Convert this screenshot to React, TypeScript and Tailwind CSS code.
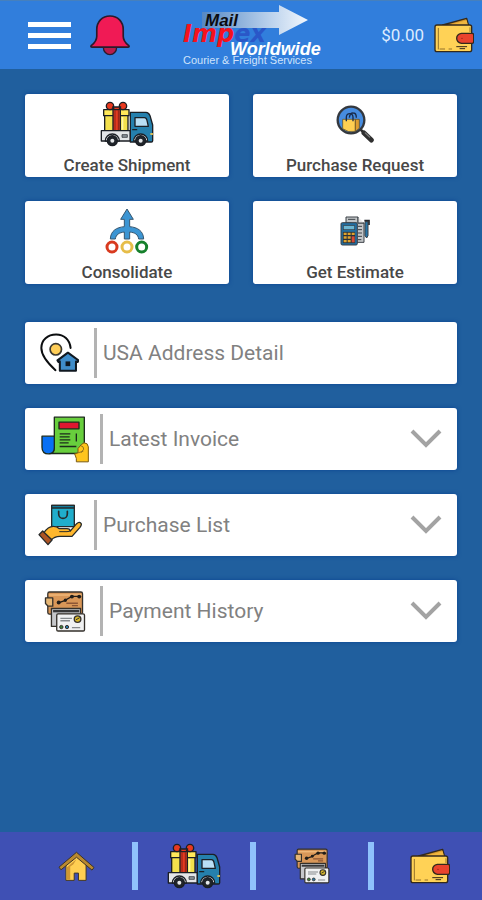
import type { ReactNode } from "react";

type IconProps = { className?: string };

function BellIcon({ className = "" }: IconProps) {
  return (
    <svg viewBox="0 0 120 124" className={className} aria-hidden="true">
      <path d="M40 98a20 22 0 0 0 40 0v-4H40z" fill="#b81c4c" stroke="#2b1a2c" strokeWidth="4" />
      <path
        d="M60 3C36 3 20 21 20 44v20c0 12-4 18-16 28-3 3-2 5 2 5h108c4 0 5-2 2-5-12-10-16-16-16-28V44C100 21 84 3 60 3z"
        fill="#f01a55"
        stroke="#2b1a2c"
        strokeWidth="5"
        strokeLinejoin="round"
      />
    </svg>
  );
}

function WalletIcon({ className = "" }: IconProps) {
  return (
    <svg viewBox="0 0 120 108" className={className} aria-hidden="true">
      <g stroke="#33291c" strokeWidth="4" strokeLinejoin="round" strokeLinecap="round">
        <path d="M26 24 98 4l6 22z" fill="#d99a2b" />
        <path d="M45 24 98 10l4 16z" fill="#f0b63f" stroke="none" />
        <rect x="3" y="24" width="110" height="80" rx="6" fill="#ffd256" />
        <path d="M13 34v62M18 96h14M45 96h8M108 32v12" fill="none" stroke="#94722b" strokeWidth="3" />
        <path d="M68 89h30M78 95h14" fill="none" strokeWidth="3" />
        <path d="M82 49h32q5 0 5 5v20q0 5-5 5H82q-14-3-14-15t14-15z" fill="#e9432d" />
        <circle cx="84" cy="64" r="2" fill="#8c2118" stroke="none" />
      </g>
    </svg>
  );
}

function TruckIcon({ className = "" }: IconProps) {
  return (
    <svg viewBox="0 0 162 138" className={className} aria-hidden="true">
      <g stroke="#1b1f25" strokeWidth="4" strokeLinejoin="round">
        <rect x="14" y="42" width="70" height="48" fill="#f3e04c" />
        <rect x="11" y="26" width="76" height="18" fill="#ffe95a" />
        <path d="M39 25h22v65H39z" fill="#e23a20" />
        <path d="M45 28v60M55 28v60" stroke="#8d2116" strokeWidth="3" />
        <path d="M65 48v38h5V48z" fill="#fff7a5" stroke="none" />
        <circle cx="30" cy="15" r="11" fill="#e8391f" />
        <circle cx="69" cy="15" r="11" fill="#e8391f" />
        <path d="M38 18h24l-5 8H43z" fill="#e8391f" />
        <path d="M4 89h87v31H4z" fill="#e4e6e8" />
        <path d="M91 34h47q8 0 12 10l8 28v47q0 4-4 4H91z" fill="#2580ad" />
        <path d="M105 50h28q6 0 8 8l4 18h-40z" fill="#b9dff5" />
        <path d="M66 101h16v8H66z" fill="#8f969c" strokeWidth="2" />
        <path d="M98 86h12" strokeLinecap="round" />
        <path d="M151 99h8" stroke="#f2cd52" strokeWidth="5" />
        <path d="M16 120a21 21 0 0 1 42 0zM101 120a21 21 0 0 1 42 0z" fill="#f2f4f5" />
        <circle cx="37" cy="119" r="15" fill="#20252b" />
        <circle cx="122" cy="119" r="15" fill="#20252b" />
        <circle cx="37" cy="119" r="6" fill="#e5e8ea" stroke="none" />
        <circle cx="122" cy="119" r="6" fill="#e5e8ea" stroke="none" />
      </g>
    </svg>
  );
}

function SearchBagIcon({ className = "" }: IconProps) {
  return (
    <svg viewBox="0 0 114 114" className={className} aria-hidden="true">
      <path d="m74 74 12 12" stroke="#2c2c2c" strokeWidth="8" />
      <path d="m84 84 22 21" stroke="#303030" strokeWidth="15" strokeLinecap="round" />
      <path d="m88 84 13 12" stroke="#777" strokeWidth="4" strokeLinecap="round" />
      <circle cx="45" cy="45" r="40" fill="#468ce0" stroke="#34383e" strokeWidth="7" />
      <path d="M20 43h38v36q-22 5-38-8z" fill="#ffcf52" stroke="#5b451b" strokeWidth="2" />
      <path d="M58 43h12v27l-12 9z" fill="#dc9c30" stroke="#5b451b" strokeWidth="2" />
      <path d="M31 49V36q1-10 10-10t10 10v13M40 38q2-15 12-14 9 0 9 14" fill="none" stroke="#182b4b" strokeWidth="4" />
    </svg>
  );
}

function MergeIcon({ className = "" }: IconProps) {
  return (
    <svg viewBox="0 0 132 138" className={className} aria-hidden="true">
      <path
        d="M66 3 47 34h11v22C35 58 17 68 16 93h15c2-14 12-19 27-21v21h16V72c16 2 25 7 27 21h15c-1-25-19-35-42-37V34h11z"
        fill="#3c95d3"
        stroke="#36566f"
        strokeWidth="3"
        strokeLinejoin="round"
      />
      <circle cx="21" cy="117" r="15" fill="#fff" stroke="#d83a1f" strokeWidth="9" />
      <circle cx="66" cy="117" r="15" fill="#fff" stroke="#e6bd49" strokeWidth="9" />
      <circle cx="110" cy="117" r="15" fill="#fff" stroke="#16802c" strokeWidth="9" />
    </svg>
  );
}

function CalculatorIcon({ className = "" }: IconProps) {
  return (
    <svg viewBox="0 0 90 90" className={className} aria-hidden="true">
      <g stroke="#3b4147" strokeWidth="3">
        <path d="M18 3h36v18h18v58H34V21H18z" fill="#c3c6c8" />
        <path d="M54 3v18h18" fill="#e6e6e6" />
        <path d="M24 10h22M54 31h12M54 41h12M54 51h12M54 61h12M54 71h10" />
        <path d="M75 17h9v42l-4 7-5-7z" fill="#2877a9" />
        <path d="M73 14h14v13" fill="none" stroke="#23272c" strokeWidth="5" />
        <rect x="3" y="20" width="49" height="67" rx="4" fill="#226d9f" />
        <rect x="10" y="29" width="34" height="12" fill="#6bb6d3" strokeWidth="2" />
        <path d="M9 48h36v33H9z" fill="#2c3238" strokeWidth="1" />
      </g>
      <g fill="#e0a42e">
        <path d="M11 50h9v7h-9zM23 50h9v7h-9zM35 50h9v7h-9zM11 61h9v7h-9zM23 61h9v7h-9zM11 72h9v7h-9zM23 72h9v7h-9z" />
        <path d="M35 61h9v18h-9z" fill="#d64a36" />
      </g>
    </svg>
  );
}

function AddressIcon({ className = "" }: IconProps) {
  return (
    <svg viewBox="0 0 116 118" className={className} aria-hidden="true">
      <path
        d="M46 110C22 88 4 65 4 44 4 20 23 4 48 4c23 0 40 15 43 40"
        fill="none"
        stroke="#0c0e10"
        strokeWidth="6"
        strokeLinecap="round"
      />
      <circle cx="47" cy="48" r="17" fill="#ffce58" stroke="#3b382f" strokeWidth="5" />
      <path
        d="M59 84v28h48V84l5 2 3-5-32-23-31 23 3 5z"
        fill="#3f8dca"
        stroke="#101820"
        strokeWidth="6"
        strokeLinejoin="round"
      />
      <path d="M76 84h14v14H76z" fill="#101820" />
    </svg>
  );
}

function InvoiceIcon({ className = "" }: IconProps) {
  return (
    <svg viewBox="0 0 144 140" className={className} aria-hidden="true">
      <g stroke="#1c2b1d" strokeWidth="4" strokeLinejoin="round">
        <path d="M40 3h90v96q0 13-13 13H25q15-2 15-17z" fill="#68cf3d" />
        <path d="M3 60h37v35q0 18-17 18-20 0-20-20z" fill="#0870f4" />
        <path d="M54 18h60v20H54z" fill="#df1730" />
        <path d="M56 53h32M56 62h30M56 71h32M56 80h27M106 52v24M56 91h50" strokeWidth="4" />
        <path d="M142 137v-45q-1-12-13-12l-8 5-10 12v13l-10 3 5 14v10z" fill="#ffc51d" stroke="#7a5a12" strokeWidth="3" />
        <path d="M120 89q8 1 8 10l-8 11M111 110l16-5" fill="none" stroke="#94731c" strokeWidth="3" />
      </g>
    </svg>
  );
}

function HandBagIcon({ className = "" }: IconProps) {
  return (
    <svg viewBox="0 0 132 126" className={className} aria-hidden="true">
      <g stroke="#262a2b" strokeWidth="4" strokeLinejoin="round" strokeLinecap="round">
        <path d="M41 4h68v64H41z" fill="#20adcb" />
        <path d="M41 4h68v8H41z" fill="#137d9d" />
        <path d="M62 22v7c0 19 26 19 26 0v-7" fill="none" strokeWidth="5" />
        <path
          d="M17 87q14-21 30-20 10 0 17 7h23q10 0 9 8l20-23q8-7 13-1 3 4-3 12l-24 27H66q-18 1-25 10z"
          fill="#ffb72e"
        />
        <path d="M65 83h22q8 0 9-3" fill="none" strokeWidth="3" />
        <path d="m14 81 28 27-12 14L3 92z" fill="#ad5424" />
      </g>
    </svg>
  );
}

function CardsIcon({ className = "" }: IconProps) {
  return (
    <svg viewBox="0 0 126 124" className={className} aria-hidden="true">
      <g stroke="#34302b" strokeWidth="4" strokeLinejoin="round">
        <rect x="11" y="3" width="105" height="67" rx="5" fill="#d99758" />
        <path d="M14 12h99" stroke="#efb778" strokeWidth="5" />
        <path d="m43 36 17-6 25-14h20" fill="none" stroke="#211d19" />
        <g fill="#211d19" stroke="none">
          <circle cx="44" cy="35" r="6" />
          <circle cx="64" cy="28" r="5" />
          <circle cx="84" cy="17" r="6" />
          <circle cx="106" cy="17" r="6" />
        </g>
        <path d="M67 37h35M84 44h18" stroke="#8d5635" />
        <path d="M4 21h22v25H12L4 38z" fill="#e6b675" />
        <path d="M22 53h88v18H42v36H22z" fill="#c6c7ca" />
        <path d="M27 61h79" stroke="#363637" strokeWidth="7" />
        <rect x="38" y="69" width="84" height="52" rx="4" fill="#f0f1f2" />
        <path d="M49 83h35M49 90h29M84 111h25" stroke="#85898c" />
        <circle cx="101" cy="85" r="10" fill="#d7b72c" />
        <path d="m96 87 11-6" strokeWidth="3" />
        <circle cx="52" cy="109" r="5" fill="#3d8439" strokeWidth="3" />
        <circle cx="69" cy="109" r="5" fill="#2a79a8" strokeWidth="3" />
      </g>
    </svg>
  );
}

function HomeIcon({ className = "" }: IconProps) {
  return (
    <svg viewBox="0 0 112 92" className={className} aria-hidden="true">
      <path
        d="M24 38v50h25V66h13v22h23V38L56 13z"
        fill="#ffcf52"
        stroke="#403627"
        strokeWidth="3"
      />
      <path d="M26 49 56 24 46 40 37 46v40H26z" fill="#cf9733" />
      <path
        d="M56 3 3 48l6 8 47-38 47 39 6-8z"
        fill="#b9892f"
        stroke="#3c3326"
        strokeWidth="3"
        strokeLinejoin="round"
      />
    </svg>
  );
}

function Logo({ className = "" }: IconProps) {
  return (
    <svg viewBox="0 0 146 64" className={className} role="img" aria-label="Mail Impex Worldwide">
      <defs>
        <linearGradient id="arrow" x1="0" x2="1">
          <stop offset="0" stopColor="#5588c4" />
          <stop offset="0.6" stopColor="#b4cdea" />
          <stop offset="1" stopColor="#f2f7fd" />
        </linearGradient>
      </defs>
      <path d="M19 9h77V2l29 15-29 15v-7H19z" fill="url(#arrow)" />
      <g fontWeight="700" fontStyle="italic">
        <text x="22" y="23" fontSize="17" fill="#0b0c10" fontFamily="'Liberation Sans', sans-serif">
          Mail
        </text>
        <text x="0" y="39" fontSize="24" fill="#f5121d" fontFamily="'DejaVu Sans', sans-serif">
          Imp<tspan fill="#2a57c8">ex</tspan>
        </text>
        <text x="47" y="52" fontSize="18" fill="#fff" fontFamily="'Liberation Sans', sans-serif">
          Worldwide
        </text>
      </g>
      <text x="0" y="61" fontSize="11" fill="#cfe3fb" fontFamily="'Liberation Sans', sans-serif">
        Courier &amp; Freight Services
      </text>
    </svg>
  );
}

function ActionCard({ label, children }: { label: string; children: ReactNode }) {
  return (
    <button
      type="button"
      className="flex h-[83px] flex-col items-center rounded-[3px] bg-white shadow-[0_0_4px_#0b4391]"
    >
      <span className="flex h-[60px] items-center justify-center">{children}</span>
      <span className="text-[17px] leading-6 font-medium text-[#484848]">{label}</span>
    </button>
  );
}

function MenuRow({
  label,
  icon,
  wide = false,
  expandable = true,
}: {
  label: string;
  icon: ReactNode;
  wide?: boolean;
  expandable?: boolean;
}) {
  return (
    <button
      type="button"
      className="flex h-[62px] w-full items-center rounded-[3px] bg-white pr-[15px] text-left shadow-[0_0_4px_#0b4391]"
    >
      <span className={`flex shrink-0 justify-center ${wide ? "w-[75px] pl-1" : "w-[69px]"}`}>
        {icon}
      </span>
      <span className="h-[50px] w-[3px] shrink-0 bg-[#b3b3b3]" />
      <span className="flex-1 pl-1.5 text-[21px] leading-7 text-[#818181]">{label}</span>
      {expandable && (
        <svg viewBox="0 0 32 20" className="h-5 w-8 shrink-0" aria-hidden="true">
          <path d="m2 2 14 14L30 2" fill="none" stroke="#a3a3a3" strokeWidth="4" />
        </svg>
      )}
    </button>
  );
}

export default function App() {
  return (
    <div className="flex min-h-screen flex-col bg-[#205f9e] font-[Roboto,sans-serif]">
      <header className="flex h-[69px] items-center border-t border-[#4680bd] bg-[#317edc] pr-2 pl-7">
        <button type="button" aria-label="Menu" className="flex w-[43px] flex-col gap-[6px]">
          <span className="h-[5px] bg-white" />
          <span className="h-[5px] bg-white" />
          <span className="h-[5px] bg-white" />
        </button>
        <button type="button" aria-label="Notifications" className="ml-[19px]">
          <BellIcon className="h-[41px] w-10" />
        </button>
        <div className="flex flex-1 justify-center">
          <Logo className="h-16 w-[146px]" />
        </div>
        <span className="text-[17px] leading-6 text-[#dcebff]">$0.00</span>
        <button type="button" aria-label="Wallet" className="ml-2.5">
          <WalletIcon className="h-9 w-10" />
        </button>
      </header>

      <main className="flex-1 px-[25px] pt-[25px] pb-6">
        <div className="grid grid-cols-2 gap-6">
          <ActionCard label="Create Shipment">
            <TruckIcon className="h-[46px] w-[54px]" />
          </ActionCard>
          <ActionCard label="Purchase Request">
            <SearchBagIcon className="h-[38px] w-[38px]" />
          </ActionCard>
          <ActionCard label="Consolidate">
            <MergeIcon className="h-[46px] w-11" />
          </ActionCard>
          <ActionCard label="Get Estimate">
            <CalculatorIcon className="h-[30px] w-[30px]" />
          </ActionCard>
        </div>

        <div className="mt-[38px] flex flex-col gap-6">
          <MenuRow
            label="USA Address Detail"
            icon={<AddressIcon className="h-10 w-[39px]" />}
            expandable={false}
          />
          <MenuRow label="Latest Invoice" icon={<InvoiceIcon className="h-[47px] w-12" />} wide />
          <MenuRow label="Purchase List" icon={<HandBagIcon className="h-[42px] w-11" />} />
          <MenuRow label="Payment History" icon={<CardsIcon className="h-[41px] w-[42px]" />} wide />
        </div>
      </main>

      <nav className="grid h-[68px] grid-cols-[112fr_6px_112fr_6px_112fr_6px_108fr] items-center justify-items-center bg-[#3f50b4] pl-5">
        <a href="#home" aria-label="Home">
          <HomeIcon className="h-[31px] w-[37px]" />
        </a>
        <span className="h-12 w-full bg-[#8fc2fc]" />
        <a href="#shipments" aria-label="Shipments">
          <TruckIcon className="h-[46px] w-[54px]" />
        </a>
        <span className="h-12 w-full bg-[#8fc2fc]" />
        <a href="#payments" aria-label="Payments">
          <CardsIcon className="h-9 w-9" />
        </a>
        <span className="h-12 w-full bg-[#8fc2fc]" />
        <a href="#wallet" aria-label="Wallet" className="pl-1">
          <WalletIcon className="h-9 w-10" />
        </a>
      </nav>
    </div>
  );
}
